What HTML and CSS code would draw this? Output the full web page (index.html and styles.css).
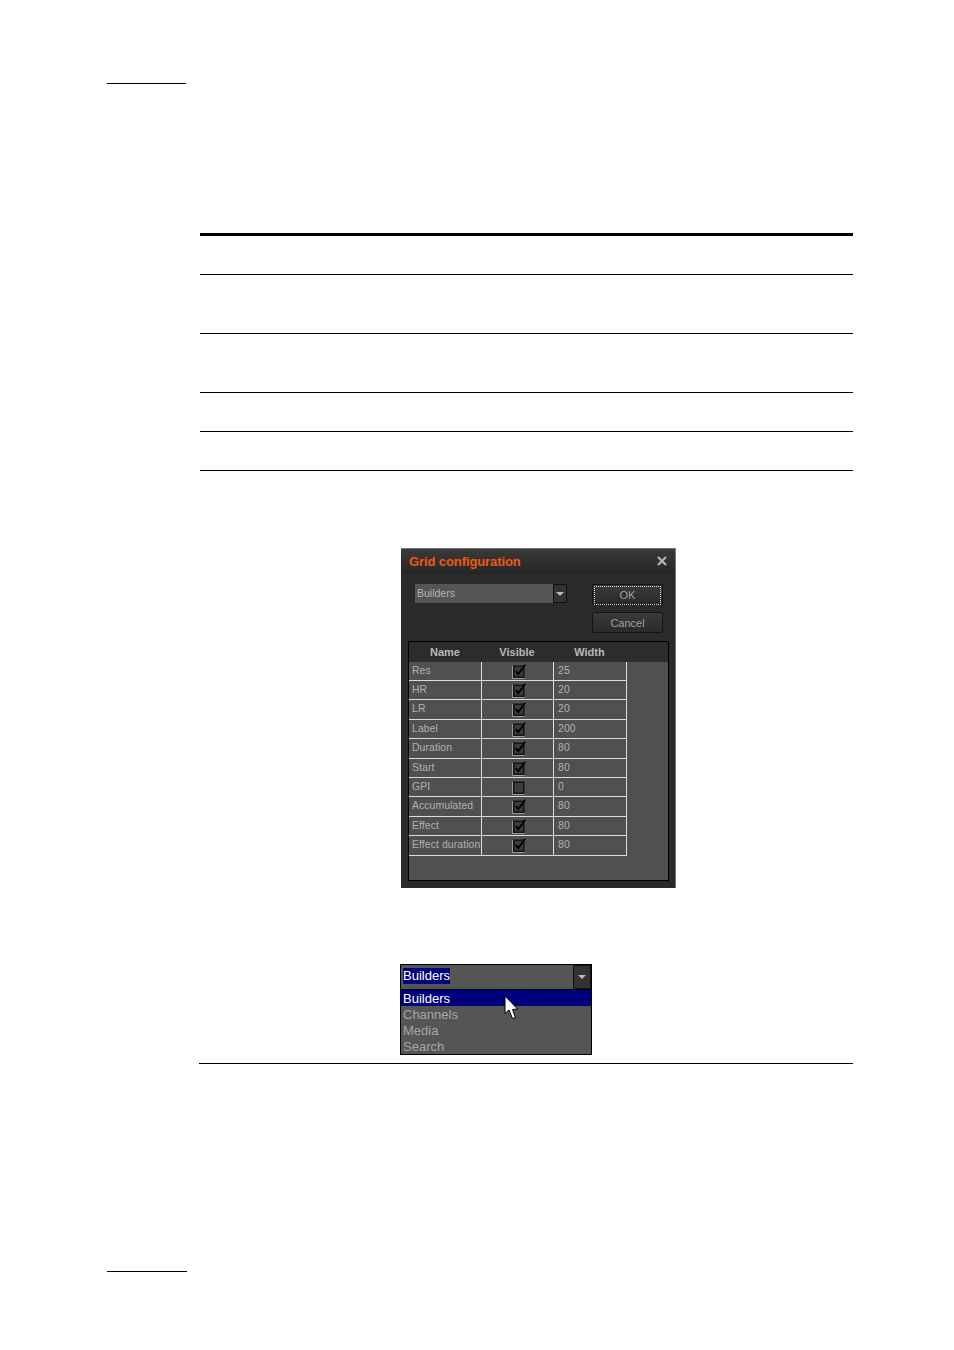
FILE: index.html
```html
<!DOCTYPE html>
<html lang="en">
<head>
    <meta charset="UTF-8">
    <meta name="viewport" content="width=device-width, initial-scale=1.0">
    <title>Grid configuration</title>
    <link rel="stylesheet" href="styles.css">
</head>
<body>
    <svg class="defs" width="0" height="0">
        <symbol id="check" viewBox="0 0 14 15">
            <path d="M0.5 2 V14.5 H12.5" fill="none" stroke="#9a9a9a" stroke-width="1"/>
            <rect x="1.75" y="2.25" width="10" height="11" fill="#3c3c3c" stroke="#141414" stroke-width="1.5"/>
            <path d="M3.8 7 L6.2 10.2 L10.2 5" fill="none" stroke="#000" stroke-width="2"/>
            <path d="M10 5.2 L13.2 0.8" fill="none" stroke="#000" stroke-width="1.5"/>
        </symbol>
        <symbol id="uncheck" viewBox="0 0 14 15">
            <path d="M0.5 2 V14.5 H12.5" fill="none" stroke="#9a9a9a" stroke-width="1"/>
            <rect x="1.75" y="2.25" width="10" height="11" fill="#3c3c3c" stroke="#141414" stroke-width="1.5"/>
        </symbol>
    </svg>

    <div class="rule-short rule-top"></div>

    <div class="spec-table">
        <div class="spec-row row-head"></div>
        <div class="spec-row row-tall"></div>
        <div class="spec-row row-tall"></div>
        <div class="spec-row row-short"></div>
        <div class="spec-row row-short"></div>
    </div>

    <div class="dialog">
        <div class="title-bar">
            <span class="title">Grid configuration</span>
            <svg class="close" width="10" height="10" viewBox="0 0 10 10"><path d="M1 1 L9 9 M9 1 L1 9" stroke="#b4b4b4" stroke-width="2.2"/></svg>
        </div>
        <div class="controls">
            <div class="select">
                <span class="select-value">Builders</span>
                <span class="select-btn"><i class="arrow"></i></span>
            </div>
            <div class="buttons">
                <div class="btn btn-ok"><span>OK</span></div>
                <div class="btn">Cancel</div>
            </div>
        </div>
        <div class="grid">
            <div class="grid-head">
                <span>Name</span>
                <span>Visible</span>
                <span>Width</span>
            </div>
            <div class="grid-row"><span>Res</span><span class="box"><svg width="14" height="15"><use href="#check"/></svg></span><span>25</span></div>
            <div class="grid-row"><span>HR</span><span class="box"><svg width="14" height="15"><use href="#check"/></svg></span><span>20</span></div>
            <div class="grid-row"><span>LR</span><span class="box"><svg width="14" height="15"><use href="#check"/></svg></span><span>20</span></div>
            <div class="grid-row"><span>Label</span><span class="box"><svg width="14" height="15"><use href="#check"/></svg></span><span>200</span></div>
            <div class="grid-row"><span>Duration</span><span class="box"><svg width="14" height="15"><use href="#check"/></svg></span><span>80</span></div>
            <div class="grid-row"><span>Start</span><span class="box"><svg width="14" height="15"><use href="#check"/></svg></span><span>80</span></div>
            <div class="grid-row"><span>GPI</span><span class="box"><svg width="14" height="15"><use href="#uncheck"/></svg></span><span>0</span></div>
            <div class="grid-row"><span>Accumulated</span><span class="box"><svg width="14" height="15"><use href="#check"/></svg></span><span>80</span></div>
            <div class="grid-row"><span>Effect</span><span class="box"><svg width="14" height="15"><use href="#check"/></svg></span><span>80</span></div>
            <div class="grid-row"><span>Effect duration</span><span class="box"><svg width="14" height="15"><use href="#check"/></svg></span><span>80</span></div>
        </div>
    </div>

    <div class="combo">
        <div class="combo-input">
            <span class="combo-text">Builders</span>
            <span class="combo-btn"><i class="arrow"></i></span>
        </div>
        <ul class="combo-list">
            <li class="selected">Builders</li>
            <li>Channels</li>
            <li>Media</li>
            <li>Search</li>
        </ul>
        <svg class="cursor" width="16" height="26" viewBox="0 0 16 26">
            <path d="M1 1 L1 18.5 L5 15 L8.5 23.5 L11.5 22.5 L8.5 14.5 L13.5 14 Z" fill="#fff" stroke="#000" stroke-width="1"/>
        </svg>
    </div>

    <div class="rule-bottom"></div>
    <div class="rule-short rule-foot"></div>
</body>
</html>
```

FILE: styles.css
```css
body {
    margin: 0;
    background-color: #fff;
    font-family: "Liberation Sans", Arial, sans-serif;
    overflow: hidden;
}

.defs {
    display: block;
    height: 0;
}

.rule-short {
    width: 79px;
    height: 1px;
    margin-left: 107px;
    background-color: #000;
}

.rule-top {
    margin-top: 83px;
}

.spec-table {
    width: 653px;
    margin: 149px 0 0 200px;
    border-top: 3px solid #000;
}

.spec-row {
    border-bottom: 1px solid #000;
}

.row-head {
    height: 38px;
}

.row-tall {
    height: 58px;
}

.row-short {
    height: 38px;
}

/* dialog */
.dialog {
    width: 275px;
    height: 340px;
    margin: 77px 0 0 401px;
    box-sizing: border-box;
    background-color: #2a2a2a;
    border-top: 1px solid #777;
    border-right: 1px solid #777;
    display: flex;
    flex-direction: column;
}

.title-bar {
    height: 25px;
    padding: 0 8px;
    display: flex;
    align-items: center;
    justify-content: space-between;
    background: linear-gradient(#3a3a3a, #262626);
}

.title {
    color: #f15a0e;
    font-size: 13px;
    font-weight: bold;
    letter-spacing: -0.1px;
}

.close {
    margin: -2px 0 0 0;
}

.controls {
    display: flex;
    justify-content: space-between;
    padding: 10px 12px 0 14px;
    height: 57px;
    box-sizing: content-box;
}

.select {
    width: 152px;
    height: 19px;
    display: flex;
    background-color: #555;
}

.select-value {
    flex: 1;
    padding-left: 2px;
    color: #b5b5b5;
    font-size: 10.5px;
    line-height: 18px;
}

.select-btn {
    width: 12px;
    background-color: #333;
    border: 1px solid #111;
    display: flex;
    align-items: center;
    justify-content: center;
}

.arrow {
    width: 0;
    height: 0;
    border-left: 4px solid transparent;
    border-right: 4px solid transparent;
    border-top: 4px solid #bbb;
}

.buttons {
    display: flex;
    flex-direction: column;
    gap: 7px;
}

.btn {
    width: 71px;
    height: 21px;
    box-sizing: border-box;
    border: 1px solid #151515;
    border-radius: 2px;
    background: linear-gradient(#3a3a3a, #2a2a2a);
    color: #a0a0a0;
    font-size: 11px;
    line-height: 21px;
    text-align: center;
}

.btn-ok {
    padding: 1px;
}

.btn-ok span {
    display: block;
    height: 17px;
    line-height: 17px;
    border: 1px dotted #ddd;
}

.grid {
    width: 261px;
    height: 240px;
    margin-left: 7px;
    box-sizing: border-box;
    border: 1px solid #000;
    background-color: #505050;
}

.grid-head {
    height: 19.6px;
    display: grid;
    grid-template-columns: 72px 72px 73px;
    background-color: #2c2c2c;
    color: #b8b8b8;
    font-size: 11px;
    font-weight: bold;
    line-height: 21px;
    text-align: center;
}

.grid-row {
    width: 217px;
    height: 18.4px;
    display: grid;
    grid-template-columns: 73px 72px 72px;
    border-bottom: 1px solid #ddd;
    border-right: 1px solid #ddd;
    box-sizing: content-box;
    color: #b0b0b0;
    font-size: 10.4px;
    letter-spacing: 0.1px;
    line-height: 17px;
}

.grid-row span {
    padding-left: 3px;
    white-space: nowrap;
    border-right: 1px solid #ddd;
}

.grid-row span:last-child {
    padding-left: 4px;
    border-right: none;
}

.grid-row .box {
    padding-left: 30px;
    padding-top: 2px;
}

.box svg {
    display: block;
}

/* builders combo */
.combo {
    position: relative;
    width: 192px;
    height: 91px;
    margin: 76px 0 0 400px;
    box-sizing: border-box;
    border: 1px solid #000;
    background-color: #555;
    font-size: 13px;
    color: #a5a5a5;
}

.combo-input {
    height: 24px;
    display: flex;
    align-items: center;
    justify-content: space-between;
    padding-left: 2px;
    border-bottom: 1px solid #000;
}

.combo-text {
    margin-top: -2px;
    background-color: #00007f;
    color: #fff;
    line-height: 16px;
}

.combo-btn {
    width: 18px;
    height: 24px;
    box-sizing: border-box;
    background-color: #333;
    border: 1px solid #111;
    display: flex;
    align-items: center;
    justify-content: center;
}

.combo-list {
    list-style: none;
    margin: 0;
    padding: 0;
}

.combo-list li {
    height: 16px;
    line-height: 18px;
    padding-left: 2px;
}

.combo-list .selected {
    background-color: #00007f;
    color: #fff;
}

.cursor {
    position: absolute;
    left: 103px;
    top: 30px;
}

.rule-bottom {
    width: 654px;
    height: 1px;
    margin: 8px 0 0 199px;
    background-color: #000;
}

.rule-foot {
    width: 80px;
    margin-top: 207px;
}
```
